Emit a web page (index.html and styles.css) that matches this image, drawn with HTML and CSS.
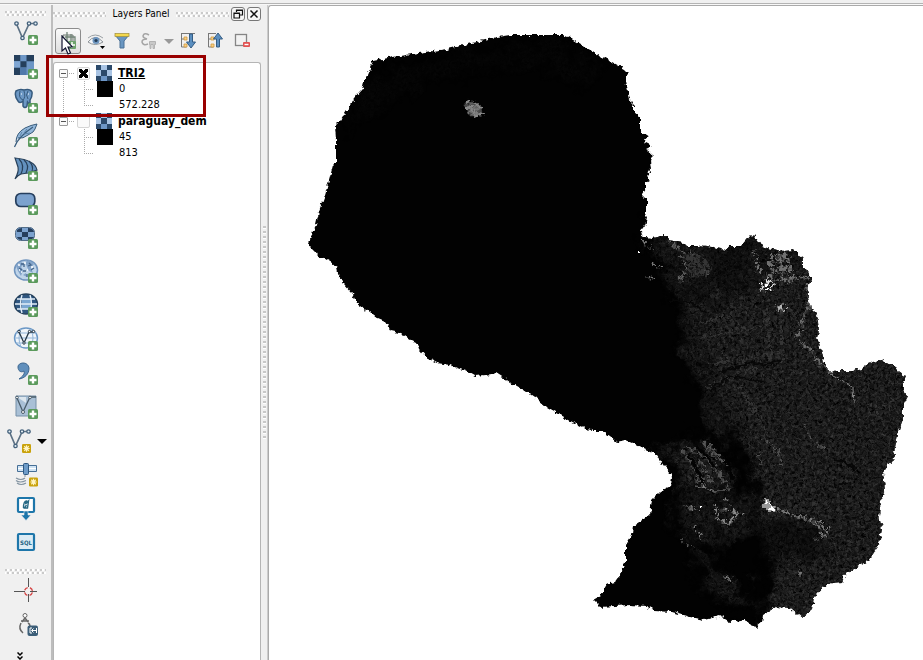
FILE: index.html
```html
<!DOCTYPE html>
<html lang="en">
<head>
<meta charset="utf-8">
<title>Layers Panel</title>
<link rel="stylesheet" href="styles.css">
</head>
<body>
<svg class="defs" aria-hidden="true">
  <symbol id="plus" viewBox="0 0 10 10"><rect width="10" height="10" rx="1.5" fill="#5b9a5c"/><path d="M5 1.5v7M1.5 5h7" stroke="#fff" stroke-width="2.4"/></symbol>
  <symbol id="star" viewBox="0 0 10 10"><rect width="10" height="10" rx="1.5" fill="#c9a20c"/><path d="M5 1.5v7M1.5 5h7M2.5 2.5l5 5M7.5 2.5l-5 5" stroke="#fff4c4" stroke-width="1.3"/></symbol>
  <symbol id="vee" viewBox="0 0 26 24"><path d="M3.500 4L9.500 18L16 4M17 3.500H22" fill="none" stroke="#5c7184" stroke-width="1.700"/><g fill="#e8f0f6" stroke="#45627c" stroke-width="1.300"><circle cx="3.500" cy="3.500" r="1.700"/><circle cx="9.500" cy="18" r="1.700"/><circle cx="16" cy="3.500" r="1.700"/><circle cx="22.500" cy="3.500" r="1.700"/></g></symbol>
  <symbol id="raster" viewBox="0 0 16 16"><rect width="16" height="16" fill="#6d96c6"/><path d="M0 0h5v5H0zM10 0h6v5h-6zM5 5h5v5H5zM0 10h5v6H0z" fill="#253f5c"/><path d="M5 10h5v6H5z" fill="#5079aa"/><path d="M0 5h5v5H0z" fill="#7fa6d3"/></symbol>
  <symbol id="mini-raster" viewBox="0 0 16 16"><rect width="16" height="16" fill="#6d96c6"/><path d="M5 0h6v5H5zM11 5h5v6h-5zM0 5h5v6H0z" fill="#a9c4e4"/><path d="M0 0h5v5H0zM11 0h5v5h-5zM5 5h6v6H5zM0 11h5v5H0zM11 11h5v5h-5z" fill="#2c4a6b"/></symbol>
</svg>
<div class="top-edge"></div>
<main class="window">
  <nav class="tools" aria-label="Manage layers">
    <div class="grip"></div>
    <button class="tool" aria-label="Add vector layer"><svg viewBox="0 0 26 26"><use href="#vee" width="26" height="24"/><use href="#plus" x="15" y="15" width="10" height="10"/></svg></button>
    <button class="tool" aria-label="Add raster layer"><svg viewBox="0 0 26 26"><use href="#raster" x="1" y="1" width="20" height="20"/><use href="#plus" x="15" y="15" width="10" height="10"/></svg></button>
    <button class="tool" aria-label="Add PostGIS layer"><svg viewBox="0 0 26 26"><path d="M3 3Q7 .5 11 2Q17 .5 19 4Q19.500 9 17 12V15Q16 16 14.500 14L14 18Q12 21 10 18V13Q7 16 5 13Q1 8 3 3Z" fill="#6d98c5" stroke="#365a7d" stroke-width="1.500"/><path d="M7 3Q5 10 10 12Q13 9 11 3M15 3Q12 7 15 11" fill="none" stroke="#365a7d"/><path d="M8 6h1M15 6h1" stroke="#fff"/><use href="#plus" x="15" y="15" width="10" height="10"/></svg></button>
    <button class="tool" aria-label="Add SpatiaLite layer"><svg viewBox="0 0 26 26"><path d="M3 20Q3 11 12 6Q18 3 24 2Q22 8 20 10L15 13Q10 17 5 16" fill="#93b7da" stroke="#395c7c"/><path d="M1.500 25Q5 15 20 5" fill="none" stroke="#395c7c" stroke-width="1.200"/><path d="M7 14L9 10M11 11L14 7M11 12L17 11" fill="none" stroke="#5c83aa"/><use href="#plus" x="15" y="15" width="10" height="10"/></svg></button>
    <button class="tool" aria-label="Add MSSQL layer"><svg viewBox="0 0 26 26"><path d="M2 2Q22 4 24 14L15 17L8 18Q5 19 2 23Q6 16 5 11Z" fill="#6391be" stroke="#273f58" stroke-width="1.200"/><path d="M6 3Q12 9 8 18M11 4Q17 9 13 17M16 5Q21 10 19 15" fill="none" stroke="#273f58" stroke-width="1.200"/><use href="#plus" x="15" y="15" width="10" height="10"/></svg></button>
    <button class="tool" aria-label="Add Oracle layer"><svg viewBox="0 0 26 26"><rect x="2.800" y="3.500" width="19" height="13" rx="5" fill="#7ca2ce" stroke="#263f5e" stroke-width="1.700"/><use href="#plus" x="15" y="15" width="10" height="10"/></svg></button>
    <button class="tool" aria-label="Add Oracle raster"><svg viewBox="0 0 26 26"><rect x="2.500" y="3.500" width="19" height="13" rx="5" fill="#7ca2ce" stroke="#536d88"/><path d="M4 6q2-2 5-2v4H4zM15 4q5 0 6 4h-6zM9 8h6v5H9zM4 13h5v3q-4 0-5-3zM15 13h6q-2 3-6 3z" fill="#263f5e"/><use href="#plus" x="15" y="15" width="10" height="10"/></svg></button>
    <button class="tool" aria-label="Add WMS layer"><svg viewBox="0 0 26 26"><ellipse cx="13" cy="12" rx="11.500" ry="10" fill="#bfd4e9" stroke="#7195be" stroke-width="1.500"/><path d="M3 8l5-4l3 2l-3 3l2 3l-2 6l-3-5zM12 4l4-2l5 4l-3 4l2 5l-4-2l-2-4zM10 17l3-2l1 4zM4 11h3v2z" fill="#82a3c8"/><path d="M8 6h3v3M16 5l2 2l-3 1M6 10l3 2M18 12l3-2M10 13h3M14 16v3" fill="none" stroke="#45658a" stroke-width="1.300"/><path d="M5 7h2M11 5h2M18 9h2M8 14h1M14 12h1M6 12h1" stroke="#fff" stroke-width="1.500"/><use href="#plus" x="15" y="15" width="10" height="10"/></svg></button>
    <button class="tool" aria-label="Add WCS layer"><svg viewBox="0 0 26 26"><ellipse cx="13" cy="12" rx="11.500" ry="10" fill="#2f5680" stroke="#25415c" stroke-width="1.400"/><path d="M9 7h9v10H9z" fill="#7ba7d2"/><path d="M4 7h18M2 12h22M4 17h18M9 3Q6 12 9 21M17 3q3 9 0 18" fill="none" stroke="#e3eef8" stroke-width="1.400"/><use href="#plus" x="15" y="15" width="10" height="10"/></svg></button>
    <button class="tool" aria-label="Add WFS layer"><svg viewBox="0 0 26 26"><ellipse cx="13" cy="12" rx="11.500" ry="10" fill="#f0f5fa" stroke="#6b98c6" stroke-width="1.400"/><path d="M3 7h20M2 12h22M3 17h19M8 3Q4 12 8 21M18 3q4 9 0 18" fill="none" stroke="#92b5d8"/><path d="M6 6l5 11l5-11h5" fill="none" stroke="#263847" stroke-width="1.300"/><g fill="#fff" stroke="#263847"><circle cx="6" cy="5.500" r="1.200"/><circle cx="11" cy="17" r="1.200"/><circle cx="16.500" cy="5.500" r="1.200"/><circle cx="20.500" cy="5.500" r="1.200"/></g><use href="#plus" x="15" y="15" width="10" height="10"/></svg></button>
    <button class="tool" aria-label="Add delimited text layer"><svg viewBox="0 0 26 26"><path d="M5 7C5 2 15 1 16 8C16 14 12 18 6 19C10 16 12 14 11 11C8 13 5 11 5 7Z" fill="#608fbc" stroke="#3c668f"/><use href="#plus" x="15" y="15" width="10" height="10"/></svg></button>
    <button class="tool" aria-label="Add virtual layer"><svg viewBox="0 0 26 26"><path d="M3 2h20v19q-2 2-6 1H3z" fill="#a9c0d6" stroke="#7690a8"/><path d="M4 3h9v6z" fill="#dce6ee"/><path d="M4 4l6 14L17 3h6" fill="none" stroke="#4a5c6a" stroke-width="1.300"/><g fill="#fff" stroke="#4a5c6a"><circle cx="4" cy="3.500" r="1.300"/><circle cx="10" cy="18" r="1.500"/><circle cx="17" cy="3.500" r="1.300"/></g><use href="#plus" x="15" y="15" width="10" height="10"/></svg></button>
    <button class="tool tool-menu" aria-label="New layer"><svg viewBox="0 0 26 26"><use href="#vee" width="26" height="24"/><use href="#star" x="16" y="16" width="9" height="9"/></svg><span class="arrow"></span></button>
    <button class="tool" aria-label="New GPX layer"><svg viewBox="0 0 26 26"><path d="M4.500 3.500h7v6h-7zM15.500 3.500h8v6h-8z" fill="#cfe3f4" stroke="#466f96"/><path d="M5 6.500h6M16 6.500h7" stroke="#fff"/><rect x="10.500" y="1.500" width="5" height="11" rx="1" fill="#6d9bc8" stroke="#2d5780"/><path d="M13 14h-2M12 16q-4 3-9 0M13 18.500q-6 3-10 0M13 21q-5 3-9 0" fill="none" stroke="#8494a2" stroke-width="1.200"/><use href="#star" x="16" y="15" width="9" height="10"/></svg></button>
    <button class="tool" aria-label="Import layer"><svg viewBox="0 0 26 26"><rect x="5" y="2" width="16" height="14" rx="1" fill="#fff" stroke="#1d76aa" stroke-width="2.200"/><path d="M11 15V19H8L13 24.500L18 19H15V15Z" fill="#1d76aa" stroke="#f0f0f0" stroke-width=".6"/><path d="M10.500 12q0-7 3-7l-1 3l3-3l-1 7h-3l2-3" fill="none" stroke="#276985" stroke-width="1.400"/></svg></button>
    <button class="tool" aria-label="SQL window"><svg viewBox="0 0 26 26"><rect x="5" y="4" width="16" height="16" rx="1" fill="#dcecf5" stroke="#1d76aa" stroke-width="2.200"/><text x="13" y="15" text-anchor="middle" class="sql">SQL</text></svg></button>
    <div class="grip grip-second"></div>
    <button class="tool" aria-label="Capture coordinate"><svg viewBox="0 0 26 26"><path d="M1 13.500h11M17 13.500h7M15.500 0v9M15.500 16v8" stroke="#555"/><circle cx="15.500" cy="13.500" r="4" fill="none" stroke="#d64b4b" stroke-width="1.400" stroke-dasharray="4 2.283" stroke-dashoffset="-1"/></svg></button>
    <button class="tool" aria-label="Dimensioning"><svg viewBox="0 0 26 26"><circle cx="12" cy="3.500" r="2" fill="#fff" stroke="#666"/><path d="M12 6l-3 4M12 6l3 4M8 9h8M8 11q-3 6 2 10M15 11q2 1 2 3" fill="none" stroke="#666" stroke-width="1.500"/><rect x="14.500" y="13.500" width="10.500" height="10.500" rx="2" fill="#3c5e78"/><path d="M19 16h-2v5h2M23 18.500h-4M20.500 16.500l-2 2l2 2M23.500 16v5" fill="none" stroke="#fff"/></svg></button>
    <button class="more" aria-label="More tools"><svg viewBox="0 0 6 8"><path d="M.5.500l2.500 2.500l2.500-2.500M.5 4.500l2.500 2.500l2.500-2.500" fill="none" stroke="#000" stroke-width="1.500"/></svg></button>
  </nav>

  <section class="panel">
    <header class="title"><span class="grip"></span><h1>Layers Panel</h1><span class="grip"></span>
      <button class="dock" aria-label="Float"><svg viewBox="0 0 12 12"><path d="M4.500 4V2h6v5H8M2 5h5.500v5H2zM2 5.500h5.500M4.500 2.500h6" fill="none" stroke="#111" stroke-width="1.200"/></svg></button>
      <button class="dock" aria-label="Close"><svg viewBox="0 0 12 12"><path d="M2.500 2.500l7 7M9.500 2.500l-7 7" stroke="#111" stroke-width="1.500"/></svg></button>
    </header>
    <div class="bar">
      <button class="act hovered" aria-label="Add group"><svg viewBox="0 0 24 24"><path d="M7 6h10v11H7z" fill="#e2e4e2" stroke="#6d7770"/><path d="M11 3v13M15 5v10M9 8h10v9" fill="none" stroke="#718477" stroke-width="1.300"/><rect x="12" y="12" width="8" height="8" rx="1" fill="#6da36d"/><path d="M16 13v6M13 16h6" stroke="#fff" stroke-width="1.500"/></svg>
        <svg class="pointer" viewBox="0 0 12 20"><path d="M1 1V16L4.500 13L7 19L9.500 18L7 12H11.500Z" fill="#fff" stroke="#111430" stroke-width="1.200"/></svg></button>
      <button class="act" aria-label="Manage visibility"><svg viewBox="0 0 24 24"><path d="M5 13Q12 4 20 13Q12 18 5 13" fill="#f5f7fa" stroke="#8c9296"/><path d="M5 9Q12 3 20 9" fill="none" stroke="#9aa0a4"/><circle cx="13" cy="11.500" r="3.500" fill="#6c94be"/><circle cx="13" cy="11.500" r="1.600" fill="#233c55"/><path d="M17 17h5l-2.500 3z"/></svg></button>
      <button class="act" aria-label="Filter legend"><svg viewBox="0 0 24 24"><path d="M5 6H19L14 12V19H10V12Z" fill="#6996c1" stroke="#4b7196"/><rect x="5" y="4.500" width="14" height="3" fill="#f3d84d" stroke="#a08d39" stroke-width=".7"/></svg></button>
      <button class="act act-menu" aria-label="Filter by expression" disabled><svg viewBox="0 0 24 24"><path d="M13 6Q8 3 7 7Q7 9 11 10Q6 10 6 13Q7 17 12 15" fill="none" stroke="#a5a5a5" stroke-width="1.500"/><path d="M13.500 12.500h6v3h-1v4h-1.500v-4h-2v4h-1v-4h-.5z" fill="#c8c8c8" stroke="#b2b2b2"/></svg><span class="arrow"></span></button>
      <button class="act" aria-label="Expand all"><svg viewBox="0 0 24 24"><path d="M5 4.500h14M5.500 5v13h5M5 10h5" fill="none" stroke="#777"/><path d="M8 8h3v3H8zM8 15h3v3H8z" fill="#f8cf86" stroke="#cf9a3c" stroke-width=".8"/><path d="M13.500 5h3v8h3l-4.500 6l-4.500-6h3z" fill="#5b8fc0" stroke="#355d84"/></svg></button>
      <button class="act" aria-label="Collapse all"><svg viewBox="0 0 24 24"><path d="M5 4.500h8M5.500 5v13h5M5 10h5" fill="none" stroke="#777"/><path d="M8 8h3v3H8zM8 15h3v3H8z" fill="#f8cf86" stroke="#cf9a3c" stroke-width=".8"/><path d="M13.500 18h3v-8h3l-4.500-6l-4.500 6h3z" fill="#5b8fc0" stroke="#355d84"/></svg></button>
      <button class="act" aria-label="Remove layer"><svg viewBox="0 0 24 24"><rect x="5.500" y="5.500" width="11" height="11" fill="#f2f2f2" stroke="#858585" stroke-width="1.300"/><rect x="13" y="13" width="7" height="5" rx="1" fill="#e15252"/><path d="M14.500 15.500h4" stroke="#fff" stroke-width="1.400"/></svg></button>
    </div>
    <ul class="tree">
      <li class="layer">
        <div class="row"><button class="toggle" aria-label="Collapse TRI2"></button><span class="link"></span><input type="checkbox" id="tri" checked><svg class="thumb"><use href="#mini-raster" width="16" height="16"/></svg><label class="name current" for="tri">TRI2</label></div>
        <ul class="legend"><li><span class="swatch"></span>0</li><li><span class="swatch empty"></span>572.228</li></ul>
      </li>
      <li class="layer">
        <div class="row"><button class="toggle" aria-label="Collapse paraguay_dem"></button><span class="link"></span><input type="checkbox" id="dem"><svg class="thumb"><use href="#mini-raster" width="16" height="16"/></svg><label class="name" for="dem">paraguay_dem</label></div>
        <ul class="legend"><li><span class="swatch"></span>45</li><li><span class="swatch empty"></span>813</li></ul>
      </li>
    </ul>
    <div class="callout"></div>
  </section>
  <div class="splitter"><span></span></div>
  <section class="canvas">
    <svg class="map" viewBox="269 6 654 654" preserveAspectRatio="xMinYMin meet" role="img" aria-label="Terrain ruggedness of Paraguay">
      <defs>
        <path id="land" d="M373 61L393 57L419 53L447 49L480 41L497 37L510 35L563 35L568 37L597 54L625 69L629 73L626 76V82L629 95L631 103L634 106V112L640 117V130L649 136L644 142L652 146L646 149L654 156L650 160L651 170L647 176L651 180L646 184V189L642 195L646 199V212L644 214L647 217L645 226L640 233L645 237L652 238L660 236H667L669 240L684 243L687 246H698L700 245L713 247L725 250L730 246H741L746 240L750 235L752 237L754 235L757 240L760 244L767 248L778 250L784 251L792 250L797 252V255L803 259V268L808 272L811 276V283L808 285V298L811 308L817 314L819 330L817 338L821 348L824 362L829 370L832 373L836 371H853L862 368L868 364L880 360L885 363L896 366L901 374L906 377L903 383V390L908 396L903 406L903 420L898 434L894 452L895 456L885 471L883 474L885 490L881 500L879 516L882 529L879 545L869 560L857 567L845 575L842 582L832 583L824 586L814 597L812 609L802 618L796 613L790 608L778 607L772 609L763 615L762 622L756 627L750 625L746 619L730 622L720 616L704 620L690 617L672 612L655 611L646 606L630 605L600 607L593 600L600 596L607 584L615 582L620 575L626 560V545L632 535L633 526L650 515L652 500L660 492L671 487L672 475L664 466L655 453L645 449L632 443L625 440L617 442L610 436L602 431H592L580 426L565 418L547 408L537 399L524 390L510 382L496 373L485 375L475 376L466 371L457 368L450 365L437 363L427 358L420 350L418 343L408 338L400 333L391 331L385 322L378 319L369 312L357 303L353 294L343 283L338 274L337 266L327 260L315 253L310 248L309 243L313 231L316 225L319 212L324 198L330 177L333 165L336 162V140L335 125L341 119L354 99L362 90L364 82L370 68Z"/>
        <clipPath id="inside"><use href="#land"/></clipPath>
        <filter id="coast" x="0" y="0" width="1" height="1" filterUnits="objectBoundingBox" color-interpolation-filters="sRGB"><feTurbulence type="fractalNoise" baseFrequency=".22" numOctaves="2" seed="4"/><feDisplacementMap in="SourceGraphic" scale="6" xChannelSelector="R" yChannelSelector="G"/></filter>
        <filter id="grain" filterUnits="userSpaceOnUse" x="269" y="6" width="654" height="654" color-interpolation-filters="sRGB"><feTurbulence type="fractalNoise" baseFrequency=".35" numOctaves="4" seed="8"/><feColorMatrix values=".45 0 0 0 -.08 .45 0 0 0 -.08 .45 0 0 0 -.08 0 0 0 0 1"/></filter>
        <filter id="rough" filterUnits="userSpaceOnUse" x="269" y="6" width="654" height="654" color-interpolation-filters="sRGB"><feTurbulence type="fractalNoise" baseFrequency=".3" numOctaves="3" seed="15" result="n"/><feDisplacementMap in="SourceGraphic" in2="n" scale="9" xChannelSelector="R" yChannelSelector="G" result="d"/><feColorMatrix in="n" values="0 0 0 0 1 0 0 0 0 1 0 0 0 0 1 0 5 0 0 -1.8"/><feComposite in="d" operator="in"/></filter>
        <filter id="soft" filterUnits="userSpaceOnUse" x="269" y="6" width="654" height="654" color-interpolation-filters="sRGB"><feTurbulence type="fractalNoise" baseFrequency=".05" numOctaves="5" seed="3" result="n"/><feGaussianBlur in="SourceGraphic" stdDeviation="5"/><feDisplacementMap in2="n" scale="45" xChannelSelector="R" yChannelSelector="G"/></filter>
        <mask id="relief" maskUnits="userSpaceOnUse" x="269" y="6" width="654" height="654"><g filter="url(#soft)">
          <path d="M645 225H940V650H770L766 570L785 548L758 530L760 500L752 468L738 442L710 432L705 395L685 350L676 300Z" fill="#777"/>
          <path d="M700 310L770 275L830 250H940V650H770L768 570L785 548L762 530L764 500L756 468L742 432L722 400L705 370Z" fill="#b5b5b5"/>
          <path d="M712 240H750V270L690 312L670 295L708 290Z" fill="#555"/>
          <path d="M762 514L820 526L824 545L800 560L765 555Z" fill="#555"/>
          <path d="M660 455L690 440L725 460L735 490H690Z" fill="#aaa"/>
          <path d="M680 495H755V535L700 548L680 530Z" fill="#777"/>
          <path d="M695 550L720 570L745 600L770 610L740 609L715 595Z" fill="#888"/>
          <path d="M370 75L440 62L560 38L600 65L590 85L520 60L450 75L400 95L340 130Z" fill="#151515"/>
        </g></mask>
      </defs>
      <g filter="url(#coast)"><use href="#land" fill="#020202"/>
        <g clip-path="url(#inside)">
          <g mask="url(#relief)"><rect x="269" y="6" width="654" height="654" filter="url(#grain)"/></g>
          <path d="M464 102L469 104L472 100L475 104L480 105L483 114L478 116L475 118L472 115L467 113L466 107Z" fill="#4a4a4a"/>
          <g filter="url(#rough)" fill="none" stroke-linecap="round">
            <path d="M464 103L471 100L481 106L484 115L475 118L468 113Z" fill="#888"/>
            <path d="M670 243L683 253L686 270L680 282M690 252L701 264L707 275" stroke="#606060" stroke-width="3"/>
            <path d="M682 254L704 257L712 272L690 279Z" fill="#353535"/>
            <path d="M643 241l3 4M650 248l2 2M654 265l6 3M648 277l4 2" stroke="#777" stroke-width="3"/>
            <path d="M755 252L759 275M770 256H787L791 270L772 272ZM780 252L783 281L800 277L808 279M788 268L793 283M768 277L790 282M775 262L786 259M776 266L784 269" stroke="#707070" stroke-width="3"/>
            <path d="M761 290L766 280L773 286L768 292" stroke="#e5e5e5" stroke-width="3"/>
            <path d="M778 307H784L785 310L779 309Z" fill="#999" stroke="#b8b8b8" stroke-width="3"/>
            <path d="M808 284L809 308L803 318L801 330L797 337L806 347L813 354L821 365" stroke="#6a6a6a" stroke-width="3"/>
            <path d="M698 324L735 314M703 338L762 326M710 365L780 354M706 388L760 368M767 310L771 366M781 320L783 365M740 387L754 410L766 433M871 405L888 409L892 400M870 413L880 414" stroke="#373737" stroke-width="2"/>
            <path d="M684 453L697 471L703 485M691 449L708 458L720 475L728 490M704 444L714 457M710 447L725 465M700 462L712 482" stroke="#555" stroke-width="4"/>
            <path d="M715 507L719 520L728 525L737 515L730 509L720 511M732 511L744 514M725 500H728" stroke="#8a8a8a" stroke-width="3"/>
            <path d="M684 505L700 512M694 527L701 539M680 540L690 546M725 576L733 582M799 570V578" stroke="#777" stroke-width="2"/>
            <path d="M765 441L779 454L781 468M758 454L762 465M806 426L811 438L825 450" stroke="#505050" stroke-width="2"/>
            <path d="M773 508L805 519L820 524L827 529L825 536L817 540M817 524L822 535" stroke="#777" stroke-width="3"/>
          </g>
          <path d="M687 455L697 468L703 485M698 448L709 458L716 469M727 460L733 480" fill="none" stroke="#030303" stroke-width="3"/>
          <path d="M695 486L706 488L714 491H725M702 481L704 487M820 362L833 376L846 383L853 388L854 403" fill="none" stroke="#848484"/>
          <path d="M764 499h5v2h2v5h3v5h-8v-3h-3v-6z" fill="#999"/><path d="M765 500h2v3h-2zM769 504h2v2h-2zM769 508h5v2h-5zM699 506h2v2h-2zM766 283h2v3h-2zM765 288h2v2h-2zM638 253h2v1h-2z" fill="#fff"/>
          <path d="M720 373L739 366L753 362L761 365L781 361M710 390L730 376L749 379L767 383M834 460L845 462L850 466L856 468M840 483L848 484M670 300L690 302L706 312" fill="none" stroke="#070707" stroke-width="2"/>
        </g>
      </g>
    </svg>
  </section>
</main>
</body>
</html>
```
FILE: styles.css
```css
* { box-sizing: border-box; }
body {
  margin: 0;
  height: 100vh;
  display: flex;
  flex-direction: column;
  overflow: hidden;
  background: #f0f0f0;
  color: #000;
  font: 11px/16px "DejaVu Sans Condensed", "DejaVu Sans", sans-serif;
}
button { margin: 0; padding: 0; border: 0; background: none; font: inherit; color: inherit; }
ul { list-style: none; margin: 0; padding: 0; }
.defs { position: absolute; width: 0; height: 0; }
.top-edge { flex: none; height: 5px; border-bottom: 1px solid #f8f8f8; box-shadow: inset 0 -1px #b4b4b4; }
.window { flex: 1; min-height: 0; display: flex; }

.grip {
  height: 5px;
  background:
    linear-gradient(90deg, #cacaca 2px, #fff 2px, #fff 4px, transparent 4px) 0 0 / 5px 2px repeat-x,
    linear-gradient(90deg, #fff 1px, transparent 1px, transparent 2px, #cacaca 2px, #cacaca 4px, #fff 4px) 0 3px / 5px 2px repeat-x;
}
.tools { flex: none; width: 53px; display: flex; flex-direction: column; border-right: 2px solid #bdbdbd; }
.tools .grip { flex: none; margin: 6px 5px 0; }
.tools .grip-second { margin: 9px 5px 0; }
.tool { flex: none; height: 34px; display: flex; align-items: center; justify-content: center; }
.tool svg { width: 26px; height: 26px; }
.tool-menu { justify-content: flex-start; gap: 5px; padding-left: 6px; }
.arrow { border: 5px solid transparent; border-top-color: #000; border-bottom: 0; }
.sql { font: bold 6px "DejaVu Sans Condensed", sans-serif; fill: #1d6484; }
.more { display: flex; justify-content: center; padding: 10px 12px 0 0; }
.more svg { width: 6px; height: 8px; }

.panel { position: relative; flex: none; width: 208px; display: flex; flex-direction: column; }
.title { height: 18px; display: flex; align-items: center; gap: 2px; }
.title h1 { margin: 0 5px; font-size: 10px; font-weight: normal; }
.title .grip { flex: 1; }
.dock { width: 14px; height: 14px; border: 1px solid #777; border-radius: 3px; background: #f6f6f6; display: flex; }
.dock svg { width: 12px; height: 12px; }
.bar { display: flex; gap: 1px; padding: 5px 2px 8px; }
.act { position: relative; width: 26px; height: 26px; display: flex; align-items: center; justify-content: center; }
.act svg { width: 24px; height: 24px; flex: none; }
.act-menu { width: 38px; justify-content: space-between; }
.act-menu .arrow { border-top-color: #999; }
.hovered { border: 1px solid #8c8c8c; border-radius: 3px; background: linear-gradient(#fafafa, #dedede); }
.act .pointer { position: absolute; left: 5px; top: 6px; width: 12px; height: 20px; }

.tree { flex: 1; padding: 2px 0 0 4px; background: #fff; border: 1px solid #b5b5b5; border-bottom: 0; border-radius: 3px 3px 0 0; }
.layer { background: repeating-linear-gradient(#aaa 0 1px, transparent 1px 2px) 5px 12px / 1px 100% no-repeat; }
.layer:last-child { background: none; }
.row { display: flex; align-items: center; height: 16px; }
.toggle { width: 9px; height: 9px; margin: 0 1px; border: 1px solid #999; border-radius: 1px; background: linear-gradient(#555, #555) center / 5px 1px no-repeat #fafafa; }
.link { width: 6px; height: 1px; background: repeating-linear-gradient(90deg, #aaa 0 1px, transparent 1px 2px); }
.row input { appearance: none; width: 13px; height: 13px; margin: 0 6px 0 2px; border: 1px solid #d5d5d5; border-radius: 2px; background: #fafafa; }
.row input:checked {
  background:
    linear-gradient(45deg, transparent 37%, #000 37%, #000 63%, transparent 63%) center / 9px 9px no-repeat,
    linear-gradient(-45deg, transparent 37%, #000 37%, #000 63%, transparent 63%) center / 9px 9px no-repeat #fafafa;
}
.thumb { width: 16px; height: 16px; margin-right: 6px; }
.name { font-size: 12px; font-weight: bold; white-space: nowrap; }
.current { text-decoration: underline; }
.legend { padding-left: 26px; line-height: 18px; }
.legend li { display: flex; align-items: center; height: 16px; background: repeating-linear-gradient(90deg, #aaa 0 1px, transparent 1px 2px) 0 8px / 10px 1px no-repeat, repeating-linear-gradient(#aaa 0 1px, transparent 1px 2px) 0 0 / 1px 100% no-repeat; }
.legend li:last-child { background-size: 10px 1px, 1px 8px; }
.swatch { width: 16px; height: 16px; margin: 0 6px 0 13px; background: #000; }
.empty { background: none; }
.callout { position: absolute; left: -7px; top: 50px; width: 160px; height: 62px; border: 3px solid #990000; pointer-events: none; }

.splitter { flex: none; width: 7px; display: flex; align-items: center; justify-content: center; border-right: 1px solid #ccc; }
.splitter span { width: 3px; height: 214px; background: repeating-linear-gradient(#c8c8c8 0 2px, #fff 2px 3px, transparent 3px 5px); }
.canvas { flex: 1; min-width: 0; background: #fff; border: solid #aaa; border-width: 1px 0 0 1px; border-radius: 3px 0 0 0; }
.map { display: block; width: 100%; height: 100%; }
```
